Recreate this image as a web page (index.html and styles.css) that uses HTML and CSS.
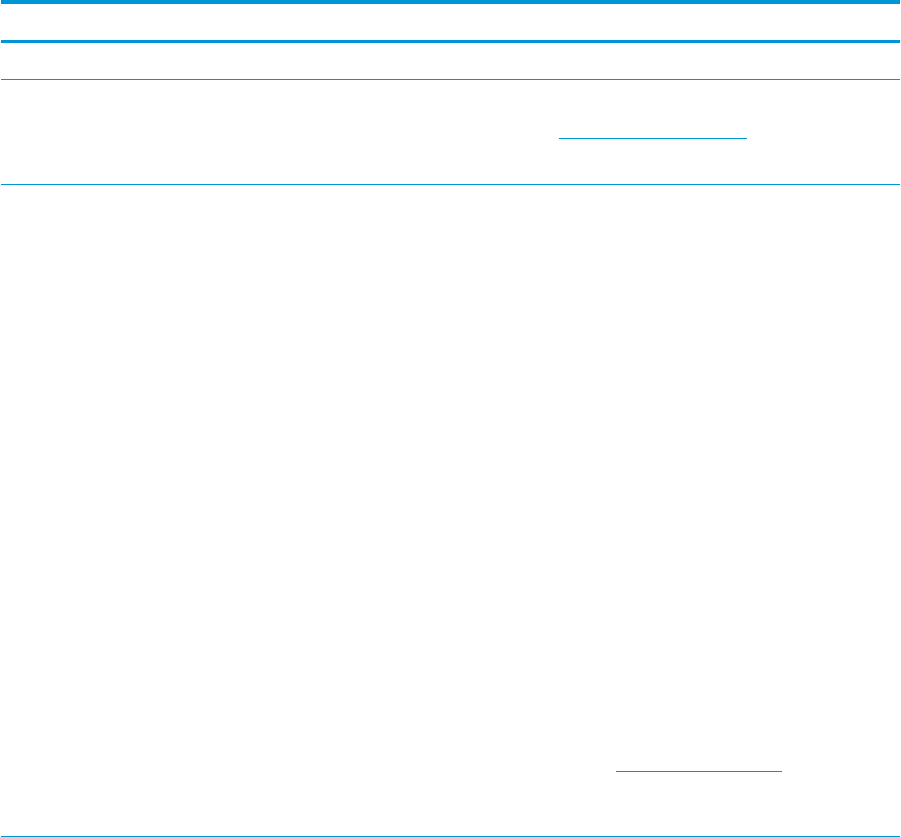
FILE: index.html
```html
<!DOCTYPE html>
<html lang="en">
<head>
    <meta charset="UTF-8">
    <title>Table</title>
    <link rel="stylesheet" href="styles.css">
</head>
<body>
    <div class="table">
        <div class="row head"></div>
        <div class="row first"></div>
        <div class="row second">
            <span class="link link-a"></span>
        </div>
        <div class="row third">
            <span class="link link-b"></span>
        </div>
    </div>
</body>
</html>
```

FILE: styles.css
```css
/* Reset */
* {
    margin: 0;
    padding: 0;
    box-sizing: border-box;
}

body {
    font-family: 'Liberation Sans', Arial, sans-serif;
    background-color: #ffffff;
    color: #ffffff;
    width: 901px;
    height: 837px;
    overflow: hidden;
}

/* Table */
.table {
    margin: 0 1px 0 1px;
    border-top: 4px solid #0096d6;
}

.row {
    display: flex;
    border-bottom: 1px solid #0096d6;
}

.row.head {
    height: 39px;
    border-bottom-width: 3px;
}

.row.first {
    height: 37px;
}

.row.second {
    height: 105px;
    padding-top: 58px;
}

.row.third {
    height: 652px;
    padding-top: 586px;
}

/* Link underlines */
.link {
    display: block;
    height: 1px;
}

.link-a {
    margin-left: 558px;
    width: 188px;
    background-color: #0096d6;
}

.link-b {
    margin-left: 615px;
    width: 166px;
    background-color: #1b8cc3;
}
```
